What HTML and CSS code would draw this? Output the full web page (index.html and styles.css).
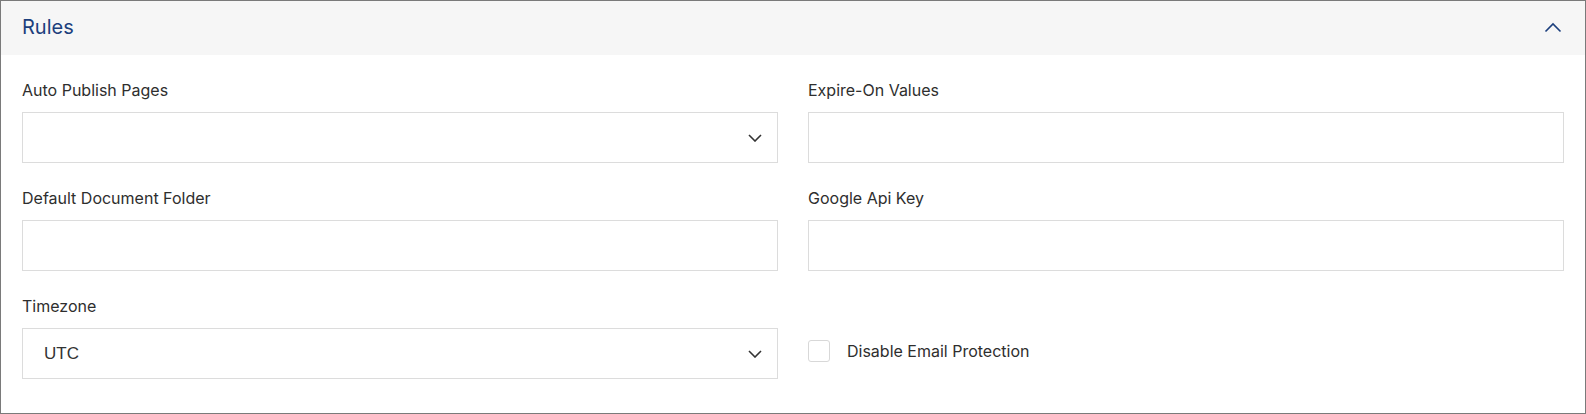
FILE: index.html
```html
<!DOCTYPE html>
<html lang="en">
<head>
<meta charset="utf-8">
<title>Rules</title>
<link rel="stylesheet" href="styles.css">
</head>
<body>
<section class="panel">
  <header class="panel-header">
    <h2 class="panel-title">Rules</h2>
    <button class="collapse-btn" type="button" aria-label="Collapse">
      <svg width="18" height="11" viewBox="0 0 18 11"><path d="M1.5 9.5 L9 2 L16.5 9.5" fill="none" stroke="currentColor" stroke-width="1.6"/></svg>
    </button>
  </header>
  <div class="panel-body">
    <div class="field">
      <label class="field-label">Auto Publish Pages</label>
      <div class="control select">
        <span class="select-value"></span>
        <svg class="chev" width="14" height="8" viewBox="0 0 14 8"><path d="M1 1 L7 7 L13 1" fill="none" stroke="currentColor" stroke-width="1.6"/></svg>
      </div>
    </div>
    <div class="field">
      <label class="field-label">Expire-On Values</label>
      <div class="control"></div>
    </div>
    <div class="field">
      <label class="field-label">Default Document Folder</label>
      <div class="control"></div>
    </div>
    <div class="field">
      <label class="field-label">Google Api Key</label>
      <div class="control"></div>
    </div>
    <div class="field">
      <label class="field-label">Timezone</label>
      <div class="control select">
        <span class="select-value">UTC</span>
        <svg class="chev" width="14" height="8" viewBox="0 0 14 8"><path d="M1 1 L7 7 L13 1" fill="none" stroke="currentColor" stroke-width="1.6"/></svg>
      </div>
    </div>
    <div class="field field-check">
      <label class="check">
        <span class="check-box"></span>
        <span class="check-label">Disable Email Protection</span>
      </label>
    </div>
  </div>
</section>
</body>
</html>
```
FILE: styles.css
```css
* { box-sizing: border-box; }
html, body { margin: 0; padding: 0; background: #fff; }
body { font-family: Inter, "Noto Sans", sans-serif; color: #2e2e2e; }

.panel {
  width: 1586px;
  height: 414px;
  border: 1px solid #7a7a7a;
  background: #fff;
}

.panel-header {
  height: 54px;
  background: #f6f6f6;
  display: flex;
  align-items: center;
  justify-content: space-between;
  padding: 0 23px 2px 21px;
}
.panel-title {
  margin: 0;
  font-size: 20px;
  font-weight: 400;
  line-height: 24px;
  color: #1c3f7d;
}
.collapse-btn {
  border: 0;
  background: none;
  padding: 0;
  color: #1c3f7d;
  display: flex;
  cursor: pointer;
}

.panel-body {
  display: grid;
  grid-template-columns: 1fr 1fr;
  column-gap: 30px;
  row-gap: 25px;
  padding: 25px 21px 0 21px;
}

.field { display: flex; flex-direction: column; }
.field-label {
  font-size: 16px;
  line-height: 20px;
  color: #2e2e2e;
  margin-bottom: 12px;
}
.control {
  height: 51px;
  border: 1px solid #dcdcdc;
  background: #fff;
}
.select {
  display: flex;
  align-items: center;
  justify-content: space-between;
  padding: 0 15px 0 21px;
}
.select-value {
  font-family: "Liberation Sans", Arial, sans-serif;
  font-size: 17px;
  color: #333;
}
.chev { color: #333; }

.field-check {
  padding-top: 32px;
}
.check {
  height: 51px;
  display: flex;
  align-items: center;
  padding-bottom: 5px;
}
.check-box {
  width: 22px;
  height: 22px;
  border: 1px solid #d8d8d8;
  border-radius: 3px;
  background: #fff;
  margin-right: 17px;
}
.check-label {
  font-size: 16px;
  color: #2e2e2e;
}
```
